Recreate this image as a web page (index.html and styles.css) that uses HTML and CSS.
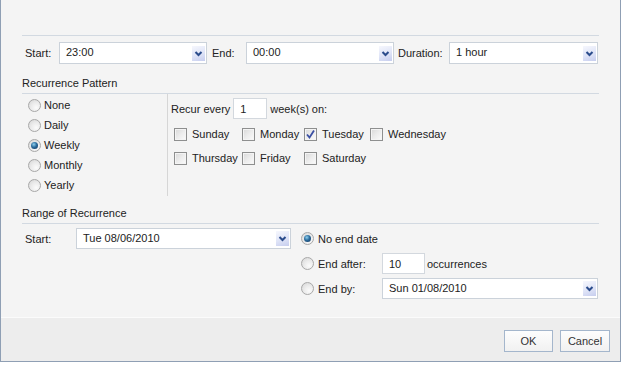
FILE: index.html
```html
<!DOCTYPE html>
<html lang="en">
<head>
  <meta charset="UTF-8">
  <title>Appointment Recurrence</title>
  <link rel="stylesheet" href="styles.css">
</head>
<body>
  <div class="dialog">
    <div class="body">

      <div class="time-row">
        <span class="lbl lbl-start">Start:</span>
        <div class="combo w-time">
          <span class="value">23:00</span>
          <span class="drop"><svg viewBox="0 0 13 15"><path d="M3.5 6l3 3 3-3" stroke="#2b4c8c" stroke-width="2" fill="none"/></svg></span>
        </div>
        <span class="lbl lbl-end">End:</span>
        <div class="combo w-time">
          <span class="value">00:00</span>
          <span class="drop"><svg viewBox="0 0 13 15"><path d="M3.5 6l3 3 3-3" stroke="#2b4c8c" stroke-width="2" fill="none"/></svg></span>
        </div>
        <span class="lbl lbl-dur">Duration:</span>
        <div class="combo w-dur">
          <span class="value">1 hour</span>
          <span class="drop"><svg viewBox="0 0 13 15"><path d="M3.5 6l3 3 3-3" stroke="#2b4c8c" stroke-width="2" fill="none"/></svg></span>
        </div>
      </div>

      <div class="section-title">Recurrence Pattern</div>
      <div class="pattern">
        <div class="kinds">
          <div class="opt"><span class="radio"></span>None</div>
          <div class="opt"><span class="radio"></span>Daily</div>
          <div class="opt"><span class="radio on"></span>Weekly</div>
          <div class="opt"><span class="radio"></span>Monthly</div>
          <div class="opt"><span class="radio"></span>Yearly</div>
        </div>
        <div class="weekly">
          <div class="recur-row">
            Recur every<span class="textbox w-every">1</span>week(s) on:
          </div>
          <div class="days">
            <div class="day"><span class="check"></span>Sunday</div>
            <div class="day"><span class="check"></span>Monday</div>
            <div class="day"><span class="check on"><svg viewBox="0 0 11 11"><path d="M2 5.5l2.5 3 4.5-7" stroke="#3a4fa3" stroke-width="1.8" fill="none"/></svg></span>Tuesday</div>
            <div class="day"><span class="check"></span>Wednesday</div>
            <div class="day"><span class="check"></span>Thursday</div>
            <div class="day"><span class="check"></span>Friday</div>
            <div class="day"><span class="check"></span>Saturday</div>
          </div>
        </div>
      </div>

      <div class="section-title range-title">Range of Recurrence</div>
      <div class="range">
        <div class="range-start">
          <span class="lbl lbl-rstart">Start:</span>
          <div class="combo w-rstart">
            <span class="value">Tue 08/06/2010</span>
            <span class="drop"><svg viewBox="0 0 13 15"><path d="M3.5 6l3 3 3-3" stroke="#2b4c8c" stroke-width="2" fill="none"/></svg></span>
          </div>
        </div>
        <div class="range-end">
          <div class="end-row">
            <span class="radio on"></span>No end date
          </div>
          <div class="end-row">
            <span class="radio"></span><span class="end-lbl">End after:</span>
            <span class="textbox w-count">10</span>occurrences
          </div>
          <div class="end-row">
            <span class="radio"></span><span class="end-lbl">End by:</span>
            <div class="combo w-endby">
              <span class="value">Sun 01/08/2010</span>
              <span class="drop"><svg viewBox="0 0 13 15"><path d="M3.5 6l3 3 3-3" stroke="#2b4c8c" stroke-width="2" fill="none"/></svg></span>
            </div>
          </div>
        </div>
      </div>

    </div>
    <div class="footer">
      <button class="btn btn-ok">OK</button>
      <button class="btn btn-cancel">Cancel</button>
    </div>
  </div>
</body>
</html>
```

FILE: styles.css
```css
body {
  margin: 0;
  background: #fff;
  font-family: "Liberation Sans", Arial, sans-serif;
  font-size: 11px;
  color: #222;
}
.dialog {
  width: 619px;
  height: 361px;
  border: 1px solid #8f9fb4;
  border-top: none;
  background: #f4f4f4;
  display: flex;
  flex-direction: column;
}
.body {
  height: 282px;
  padding: 35px 21px 0 21px;
}

/* time row */
.time-row {
  display: flex;
  align-items: center;
  border-top: 1px solid #d2d9e1;
  padding-top: 6px;
}
.lbl { flex: none; }
.lbl-start { margin-left: 3px; width: 34px; }
.lbl-end { margin-left: 5px; width: 34px; }
.lbl-dur { margin-left: 4px; width: 51px; }

.combo {
  box-sizing: border-box;
  height: 22px;
  display: flex;
  align-items: center;
  background: #fff;
  border: 1px solid #cbd2da;
  padding: 0 1px 0 6px;
}
.combo .value { flex: 1; margin-top: -2px; }
.w-time { width: 148px; }
.w-dur { width: 149px; }
.w-rstart { width: 215px; height: 21px; }
.w-endby { width: 216px; height: 21px; }

.drop {
  width: 13px;
  height: 15px;
  background: linear-gradient(160deg, #f6f7fd 0%, #dfe4f7 55%, #c6cdee 100%);
}
.drop svg { display: block; width: 13px; height: 15px; }

/* section headings */
.section-title {
  margin-top: 12px;
  line-height: 14px;
  padding-bottom: 3px;
  border-bottom: 1px solid #d2d9e1;
}
.range-title { margin-top: 10px; }

/* pattern */
.pattern {
  display: flex;
}
.kinds {
  width: 139px;
  padding: 1px 0 1px 6px;
  border-right: 1px solid #d6d6d6;
}
.opt {
  height: 20px;
  display: flex;
  align-items: center;
}
.radio {
  box-sizing: border-box;
  width: 13px;
  height: 13px;
  margin-right: 3px;
  border-radius: 50%;
  border: 1px solid #a8a8a8;
  background: radial-gradient(circle at 65% 70%, #fbfbfb 0%, #ececec 45%, #d4d4d4 100%);
  display: flex;
  align-items: center;
  justify-content: center;
  flex: none;
}
.radio.on::after {
  content: "";
  width: 7px;
  height: 7px;
  border-radius: 50%;
  background: radial-gradient(circle at 40% 35%, #8fd0ee 0%, #2b6c9d 45%, #0f2f56 100%);
}

.weekly {
  padding-left: 3px;
}
.recur-row {
  margin-top: 4px;
  height: 21px;
  display: flex;
  align-items: center;
}
.textbox {
  box-sizing: border-box;
  height: 21px;
  display: flex;
  align-items: center;
  background: #fff;
  border: 1px solid #d3d8de;
  padding-left: 6px;
  margin: 0 3px;
}
.w-every { width: 34px; }
.w-count { width: 43px; margin: 0 2px 0 0; }

.days {
  margin-top: 3px;
  padding-left: 3px;
  display: grid;
  grid-template-columns: 68px 62px 66px auto;
  grid-auto-rows: 24px;
}
.day {
  display: flex;
  align-items: center;
}
.check {
  box-sizing: border-box;
  width: 13px;
  height: 13px;
  margin-right: 5px;
  border: 1px solid #8e8f8f;
  background: linear-gradient(135deg, #d8d8d8 0%, #ececec 50%, #fbfbfb 100%);
  box-shadow: inset 0 0 0 1px #f4f4f4;
}
.check svg { display: block; width: 11px; height: 11px; }

/* range */
.range {
  display: flex;
  padding-top: 4px;
}
.range-start {
  display: flex;
  align-items: center;
  height: 21px;
}
.lbl-rstart { margin-left: 3px; width: 51px; }
.range-end {
  margin-left: 10px;
  display: flex;
  flex-direction: column;
  gap: 4px;
}
.end-row {
  height: 21px;
  display: flex;
  align-items: center;
}
.end-row .radio { margin-right: 4px; }
.end-lbl { width: 64px; }

/* footer */
.footer {
  flex: 1;
  border-top: 1px solid #fbfbfb;
  background: #ededed;
  display: flex;
  justify-content: flex-end;
  align-items: flex-start;
  gap: 7px;
  padding: 12px 10px 0 0;
}
.btn {
  box-sizing: border-box;
  height: 22px;
  font: inherit;
  color: #333;
  border: 1px solid #a4b6cc;
  background: linear-gradient(#fdfdfd, #f1f1f1);
  padding: 0;
}
.btn-ok { width: 49px; }
.btn-cancel { width: 50px; }
```
